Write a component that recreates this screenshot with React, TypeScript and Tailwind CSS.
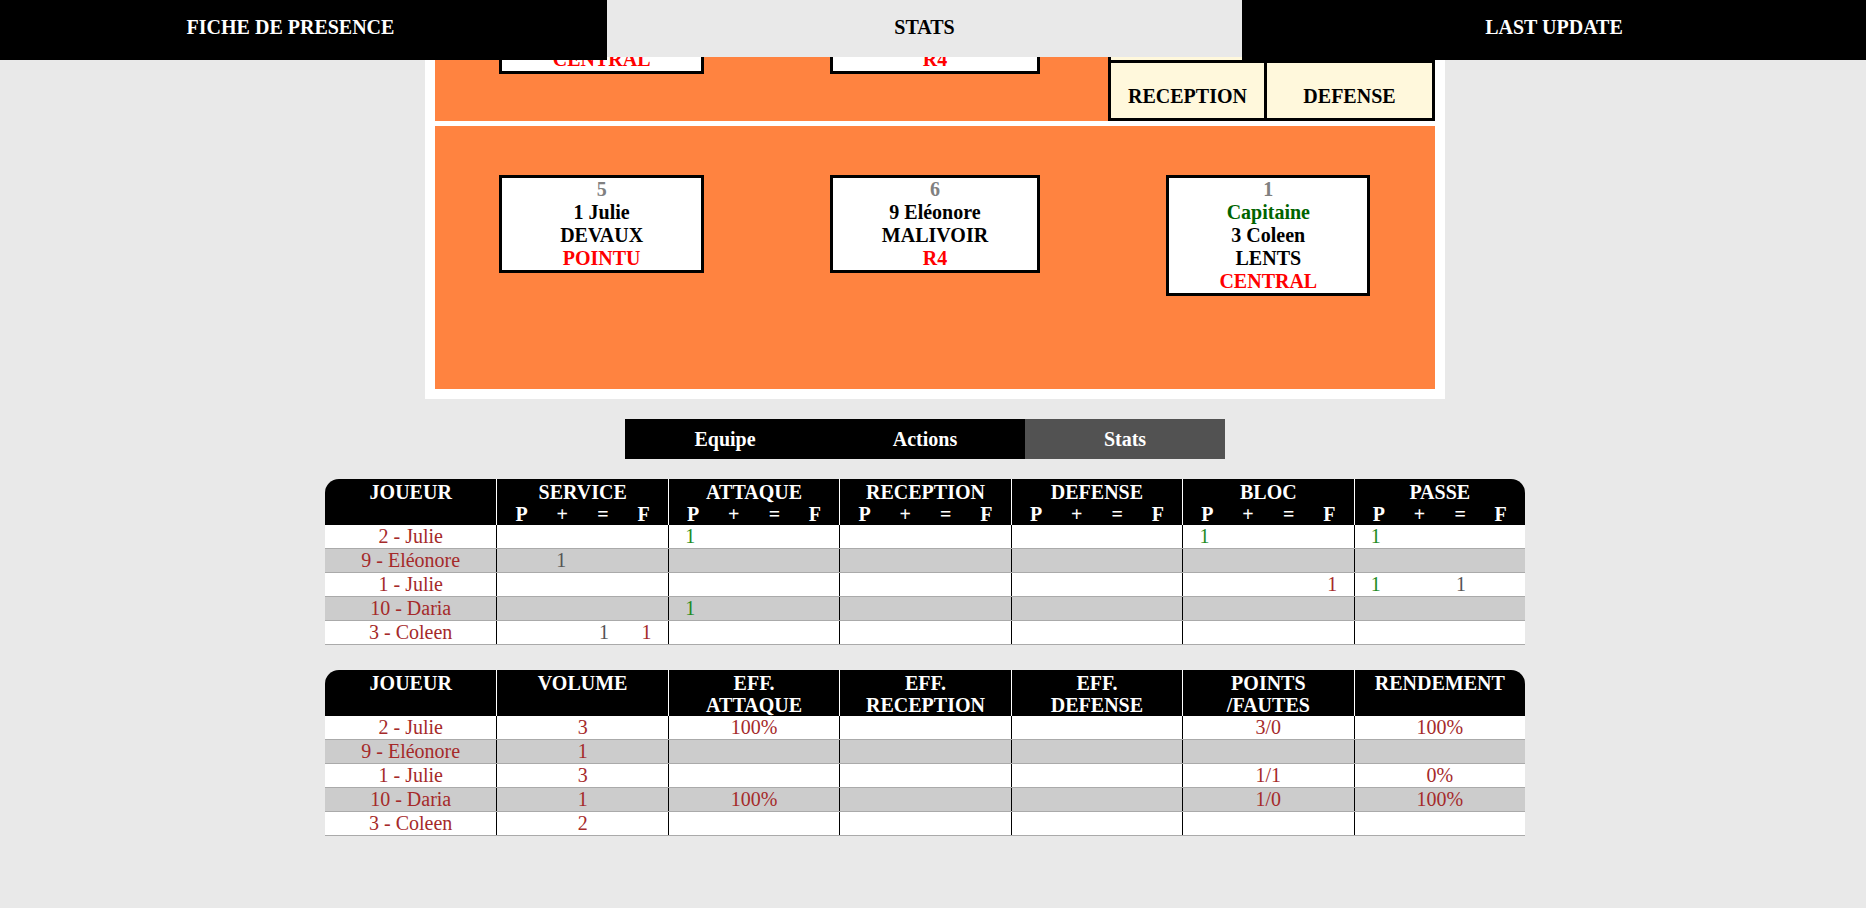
import React from 'react';

const serif = { fontFamily: '"Liberation Serif", "Times New Roman", serif' };

type Player = { num?: string; cap?: boolean; first?: string; last?: string; role: string };

// front row: only the bottom line peeks out below the fixed nav
const frontRow: Player[] = [{ role: 'CENTRAL' }, { role: 'R4' }];

const backRow: Player[] = [
  { num: '5', first: '1 Julie', last: 'DEVAUX', role: 'POINTU' },
  { num: '6', first: '9 Eléonore', last: 'MALIVOIR', role: 'R4' },
  { num: '1', cap: true, first: '3 Coleen', last: 'LENTS', role: 'CENTRAL' },
];

const boxWidths = ['w-[205px]', 'w-[210px]', 'w-[204px]'];

const PlayerBox = ({ p, w }: { p: Player; w: string }) => (
  <div className={`${w} shrink-0 border-[3px] border-black bg-white text-center text-[20px] font-bold leading-[23px]`}>
    {p.num && <div className="text-[#808080]">{p.num}</div>}
    {p.cap && <div className="text-[#006400]">Capitaine</div>}
    {p.first && <div className="text-black">{p.first}</div>}
    {p.last && <div className="text-black">{p.last}</div>}
    <div className="text-[#ff0000]">{p.role}</div>
  </div>
);

const Court = () => (
  <div className="ml-[100px] w-[1020px] bg-white p-[10px] flex flex-col gap-[5px]">
    {/* front row, mostly hidden under the fixed nav */}
    <div className="h-[111px] bg-[#ff8340] flex overflow-hidden">
      {frontRow.map((p, i) => (
        <div key={i} className="flex-1 h-full flex justify-center items-end pb-[47px]">
          <PlayerBox p={p} w={boxWidths[i]} />
        </div>
      ))}
      <div className="flex-1 h-full flex justify-end items-end">
        <div className="border-[3px] border-black bg-[#fff8dc] text-[20px] font-bold text-black">
          <div className="flex h-[55px] border-b-[3px] border-black">
            <div className="w-[156px] border-r-[3px] border-black" />
            <div className="w-[165px]" />
          </div>
          <div className="flex h-[55px]">
            <div className="w-[156px] border-r-[3px] border-black flex items-center justify-center pt-[10px]">RECEPTION</div>
            <div className="w-[165px] flex items-center justify-center pt-[10px]">DEFENSE</div>
          </div>
        </div>
      </div>
    </div>
    {/* back row */}
    <div className="h-[263px] bg-[#ff8340] flex pt-[49px]">
      {backRow.map((p, i) => (
        <div key={i} className="flex-1 flex justify-center items-start">
          <PlayerBox p={p} w={boxWidths[i]} />
        </div>
      ))}
    </div>
  </div>
);

const names = ['2 - Julie', '9 - Eléonore', '1 - Julie', '10 - Daria', '3 - Coleen'];

type Cell = [string, string] | null;
const G = '#228b22';
const D = '#555555';
const R = '#a52a2a';
const E: Cell[] = [null, null, null, null];

const statRows: Cell[][][] = [
  [E, [['1', G], null, null, null], E, E, [['1', G], null, null, null], [['1', G], null, null, null]],
  [[null, ['1', D], null, null], E, E, E, E, E],
  [E, E, E, E, [null, null, null, ['1', R]], [['1', G], null, ['1', D], null]],
  [E, [['1', G], null, null, null], E, E, E, E],
  [[null, null, ['1', D], ['1', R]], E, E, E, E, E],
];

const effRows = [
  ['3', '100%', '', '', '3/0', '100%'],
  ['1', '', '', '', '', ''],
  ['3', '', '', '', '1/1', '0%'],
  ['1', '100%', '', '', '1/0', '100%'],
  ['2', '', '', '', '', ''],
];

const HeadCell = ({ i, children }: { i: number; children: React.ReactNode }) => (
  <div
    className={`bg-black text-white h-[46px] pt-[2px] text-center text-[20px] font-bold leading-[22px] ${i > 0 ? 'border-l border-white' : ''} ${i === 0 ? 'rounded-tl-[14px]' : ''} ${i === 6 ? 'rounded-tr-[14px]' : ''}`}
  >
    {children}
  </div>
);

const rowBg = (r: number) => (r % 2 === 1 ? 'bg-[#cccccc]' : 'bg-white');

const StatsTable = () => (
  <div className="w-full">
    <div className="grid grid-cols-7">
      {['JOUEUR', 'SERVICE', 'ATTAQUE', 'RECEPTION', 'DEFENSE', 'BLOC', 'PASSE'].map((h, i) => (
        <HeadCell key={h} i={i}>
          <div>{h}</div>
          {i > 0 && (
            <div className="grid grid-cols-4 px-1">
              <span>P</span>
              <span>+</span>
              <span>=</span>
              <span>F</span>
            </div>
          )}
        </HeadCell>
      ))}
    </div>
    {names.map((n, r) => (
      <div key={n} className={`grid grid-cols-7 h-[24px] border-b border-[#aaaaaa] ${rowBg(r)} text-[20px] leading-[23px]`}>
        <div className="text-center text-[#a52a2a]">{n}</div>
        {statRows[r].map((cols, c) => (
          <div key={c} className="grid grid-cols-4 border-l border-black text-center">
            {cols.map((v, k) => (
              <span key={k} style={v ? { color: v[1] } : undefined}>
                {v ? v[0] : ''}
              </span>
            ))}
          </div>
        ))}
      </div>
    ))}
  </div>
);

const EffTable = () => (
  <div className="w-full">
    <div className="grid grid-cols-7">
      {[['JOUEUR'], ['VOLUME'], ['EFF.', 'ATTAQUE'], ['EFF.', 'RECEPTION'], ['EFF.', 'DEFENSE'], ['POINTS', '/FAUTES'], ['RENDEMENT']].map((h, i) => (
        <HeadCell key={i} i={i}>
          {h.map((l) => (
            <div key={l}>{l}</div>
          ))}
        </HeadCell>
      ))}
    </div>
    {names.map((n, r) => (
      <div key={n} className={`grid grid-cols-7 h-[24px] border-b border-[#aaaaaa] ${rowBg(r)} text-[20px] leading-[23px] text-[#a52a2a]`}>
        <div className="text-center">{n}</div>
        {effRows[r].map((v, c) => (
          <div key={c} className="border-l border-black text-center">
            {v}
          </div>
        ))}
      </div>
    ))}
  </div>
);

export default function App() {
  return (
    <div className="min-h-screen bg-[#e9e9e9]" style={serif}>
      <nav className="fixed top-0 inset-x-0 z-10 flex items-start text-[20px] font-bold">
        <div className="w-[607px] h-[60px] bg-black text-white flex justify-center pt-[12px] pr-[26px]">FICHE DE PRESENCE</div>
        <div className="w-[635px] h-[57px] bg-[#e9e9e9] text-black flex justify-center pt-[12px]">STATS</div>
        <div className="flex-1 h-[60px] bg-black text-white flex justify-center pt-[12px]">LAST UPDATE</div>
      </nav>

      <div className="mx-auto w-[1216px] pr-[16px] pb-[70px]">
        <Court />

        <div className="mt-[20px] mx-auto w-[600px] h-[40px] flex text-[20px] font-bold text-white">
          <div className="flex-1 bg-black flex items-center justify-center">Equipe</div>
          <div className="flex-1 bg-black flex items-center justify-center">Actions</div>
          <div className="flex-1 bg-[#525252] flex items-center justify-center">Stats</div>
        </div>

        <div className="mt-[20px]">
          <StatsTable />
        </div>
        <div className="mt-[25px]">
          <EffTable />
        </div>
      </div>
    </div>
  );
}
